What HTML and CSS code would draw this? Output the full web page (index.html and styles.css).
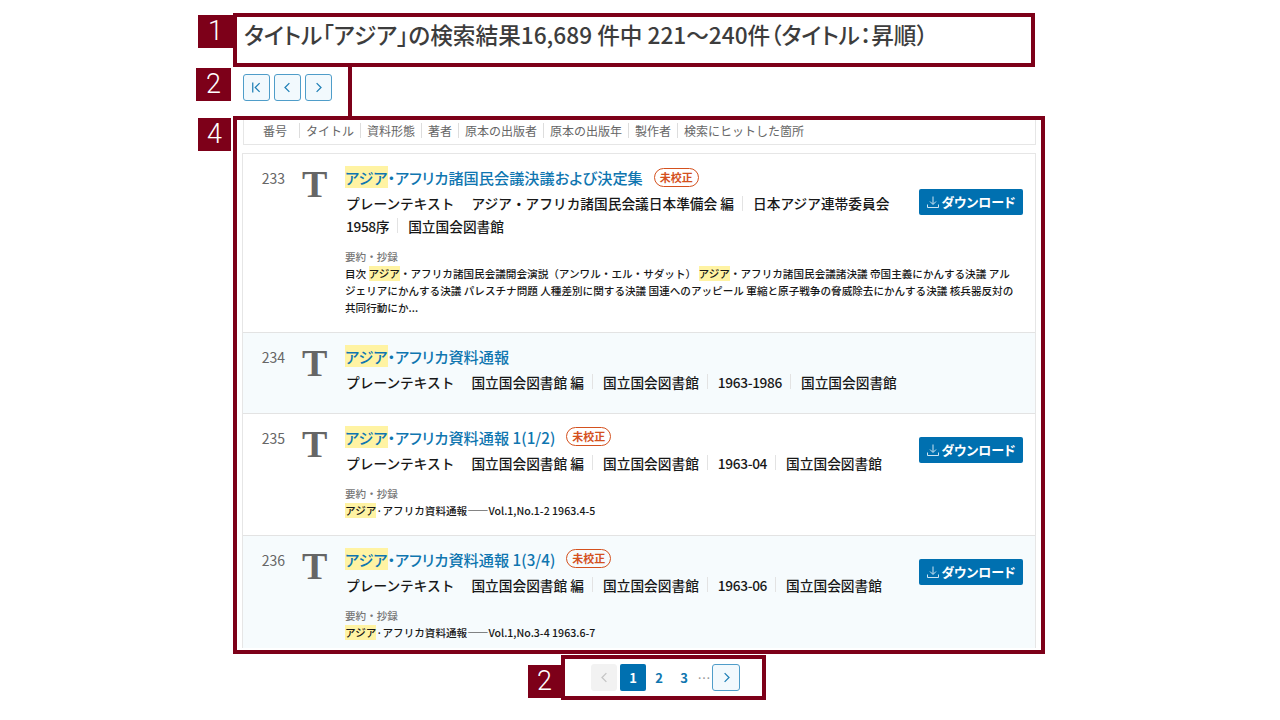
FILE: index.html
```html
<!DOCTYPE html>
<html lang="ja">
  <head>
    <meta charset="UTF-8" />
    <link rel="stylesheet" href="styles.css">
  </head>
  <body>
    <div class="page">
      <h1 class="resultTitle">タイトル「アジア」の検索結果16,689 件中 221～240件（タイトル：昇順）</h1>

      <div class="topPager">
        <button class="pageBtn"><svg viewBox="0 0 12 12"><path d="M3 2v8M8.500 2.500 5 6l3.500 3.500" /></svg></button>
        <button class="pageBtn"><svg viewBox="0 0 12 12"><path d="M7.500 2.500 4 6l3.500 3.500" /></svg></button>
        <button class="pageBtn"><svg viewBox="0 0 12 12"><path d="M4.500 2.500 8 6 4.500 9.500" /></svg></button>
      </div>

      <div class="sortBar">
        <span class="sortItem">番号</span>
        <span class="sortItem">タイトル</span>
        <span class="sortItem">資料形態</span>
        <span class="sortItem">著者</span>
        <span class="sortItem">原本の出版者</span>
        <span class="sortItem">原本の出版年</span>
        <span class="sortItem">製作者</span>
        <span class="sortItem">検索にヒットした箇所</span>
      </div>

      <div class="results">
        <div class="item">
          <div class="itemNum">233</div>
          <div class="itemType">T</div>
          <div class="itemBody">
            <div class="itemHead">
              <div class="itemInfo">
                <div class="itemTitle"><a><mark>アジア</mark>・アフリカ諸国民会議決議および決定集</a><span class="badge">未校正</span></div>
                <div class="itemMeta">
                  <span class="metaType">プレーンテキスト</span><span class="metaCell first">アジア・アフリカ諸国民会議日本準備会 編</span><span class="metaCell">日本アジア連帯委員会</span><span class="metaCell first year">1958序</span><span class="metaCell">国立国会図書館</span>
                </div>
              </div>
              <button class="dlBtn"><svg width="14" height="14" viewBox="0 0 14 14"><path d="M7 1.500v7.500M4 6.500 7 9.500l3-3M1.500 9.500v3h11v-3" /></svg>ダウンロード</button>
            </div>
            <div class="summary">
              <div class="summaryLabel">要約・抄録</div>
              <div class="summaryText">目次 <mark>アジア</mark>・アフリカ諸国民会議開会演説（アンワル・エル・サダット） <mark>アジア</mark>・アフリカ諸国民会議諸決議 帝国主義にかんする決議 アルジェリアにかんする決議 パレスチナ問題 人種差別に関する決議 国連へのアッピール 軍縮と原子戦争の脅威除去にかんする決議 核兵器反対の共同行動にか...</div>
            </div>
          </div>
        </div>

        <div class="item odd short">
          <div class="itemNum">234</div>
          <div class="itemType">T</div>
          <div class="itemBody">
            <div class="itemHead">
              <div class="itemInfo">
                <div class="itemTitle"><a><mark>アジア</mark>・アフリカ資料通報</a></div>
                <div class="itemMeta">
                  <span class="metaType">プレーンテキスト</span><span class="metaCell first">国立国会図書館 編</span><span class="metaCell">国立国会図書館</span><span class="metaCell year">1963-1986</span><span class="metaCell">国立国会図書館</span>
                </div>
              </div>
            </div>
          </div>
        </div>

        <div class="item">
          <div class="itemNum">235</div>
          <div class="itemType">T</div>
          <div class="itemBody">
            <div class="itemHead">
              <div class="itemInfo">
                <div class="itemTitle"><a><mark>アジア</mark>・アフリカ資料通報 1(1/2)</a><span class="badge">未校正</span></div>
                <div class="itemMeta">
                  <span class="metaType">プレーンテキスト</span><span class="metaCell first">国立国会図書館 編</span><span class="metaCell">国立国会図書館</span><span class="metaCell year">1963-04</span><span class="metaCell">国立国会図書館</span>
                </div>
              </div>
              <button class="dlBtn"><svg width="14" height="14" viewBox="0 0 14 14"><path d="M7 1.500v7.500M4 6.500 7 9.500l3-3M1.500 9.500v3h11v-3" /></svg>ダウンロード</button>
            </div>
            <div class="summary">
              <div class="summaryLabel">要約・抄録</div>
              <div class="summaryText"><mark>アジア</mark>·アフリカ資料通報――Vol.1,No.1-2 1963.4-5</div>
            </div>
          </div>
        </div>

        <div class="item odd">
          <div class="itemNum">236</div>
          <div class="itemType">T</div>
          <div class="itemBody">
            <div class="itemHead">
              <div class="itemInfo">
                <div class="itemTitle"><a><mark>アジア</mark>・アフリカ資料通報 1(3/4)</a><span class="badge">未校正</span></div>
                <div class="itemMeta">
                  <span class="metaType">プレーンテキスト</span><span class="metaCell first">国立国会図書館 編</span><span class="metaCell">国立国会図書館</span><span class="metaCell year">1963-06</span><span class="metaCell">国立国会図書館</span>
                </div>
              </div>
              <button class="dlBtn"><svg width="14" height="14" viewBox="0 0 14 14"><path d="M7 1.500v7.500M4 6.500 7 9.500l3-3M1.500 9.500v3h11v-3" /></svg>ダウンロード</button>
            </div>
            <div class="summary">
              <div class="summaryLabel">要約・抄録</div>
              <div class="summaryText"><mark>アジア</mark>·アフリカ資料通報――Vol.1,No.3-4 1963.6-7</div>
            </div>
          </div>
        </div>
      </div>

      <div class="bottomPager">
        <button class="pageBtn off"><svg viewBox="0 0 12 12"><path d="M7.500 2.500 4 6l3.500 3.500" /></svg></button>
        <span class="pageNum current">1</span>
        <span class="pageNum">2</span>
        <span class="pageNum">3</span>
        <span class="pageDots">…</span>
        <button class="pageBtn"><svg viewBox="0 0 12 12"><path d="M4.500 2.500 8 6 4.500 9.500" /></svg></button>
      </div>
    </div>

    <!-- annotation boxes drawn over the page -->
    <div class="note boxTitle"></div>
    <div class="note boxPager"></div>
    <div class="note boxList"></div>
    <div class="note boxBottom"></div>
    <div class="tag tag1">1</div>
    <div class="tag tag2">2</div>
    <div class="tag tag4">4</div>
    <div class="tag tag2b">2</div>
  </body>
</html>
```

FILE: styles.css
```css
* {
  box-sizing: border-box;
}

html, body {
  margin: 0;
  height: 720px;
  overflow: hidden;
  background-color: #fff;
}

body {
  font-family: "Noto Sans CJK JP", "Noto Sans", sans-serif;
  color: #222;
}

.page {
  width: 794px;
  margin-left: 242px;
  padding-top: 19px;
}

.resultTitle {
  margin: 0 0 0 2px;
  height: 32px;
  font-size: 22.650px;
  line-height: 32px;
  font-weight: 500;
  color: #3d3d3d;
  white-space: nowrap;
  font-feature-settings: "palt";
}

.topPager {
  display: flex;
  gap: 4px;
  margin: 23px 0 0 1px;
}

.pageBtn {
  display: flex;
  align-items: center;
  justify-content: center;
  width: 27px;
  height: 27px;
  padding: 0;
  background-color: #f2f9fd;
  border: 1px solid #4f9dc9;
  border-radius: 3px;
}

.pageBtn svg {
  width: 15px;
  height: 15px;
  fill: none;
  stroke: #1f7fb5;
  stroke-width: 1;
}

.pageBtn.off {
  width: 26px;
  background-color: #f2f2f2;
  border-color: #f2f2f2;
}

.pageBtn.off svg {
  stroke: #c4c4c4;
}

.sortBar {
  display: flex;
  align-items: center;
  height: 27px;
  margin: 17px 0 0 1px;
  padding: 0 0 2px 13px;
  border: 1px solid #e6e6e6;
  border-top: none;
  font-size: 12px;
  color: #666;
}

.sortItem {
  padding: 0 6px;
  line-height: 15px;
  border-left: 1px solid #ddd;
  white-space: nowrap;
}

.sortItem:first-child {
  padding-left: 6px;
  padding-right: 12px;
  border-left: none;
}

.results {
  height: 495px;
  margin-top: 8px;
  overflow: hidden;
  border: 1px solid #e6e6e6;
  border-bottom: none;
}

.item {
  display: flex;
  padding: 12px 12px 15.500px 0;
  border-bottom: 1px solid #e3e3e3;
}

.item.odd {
  background-color: #f6fbfd;
}

.item.short {
  padding-bottom: 19.500px;
}

.itemNum {
  width: 42px;
  padding-top: 1px;
  font-size: 14px;
  line-height: 22px;
  text-align: right;
  color: #666;
}

.itemType {
  width: 60px;
  padding-left: 17px;
  font-family: "Liberation Serif", serif;
  font-weight: bold;
  font-size: 38px;
  line-height: 36px;
  color: #666;
}

.itemBody {
  flex: 1;
  min-width: 0;
}

.itemHead {
  display: flex;
  align-items: center;
  justify-content: space-between;
}

.itemInfo {
  width: 566px;
}

.itemTitle {
  display: flex;
  align-items: center;
  height: 22px;
  font-size: 15.200px;
  font-weight: 500;
  color: #0f76b0;
  white-space: nowrap;
  font-feature-settings: "palt";
}

.itemTitle a {
  line-height: 22px;
}

mark {
  background-color: #fff3a3;
  color: inherit;
}

.badge {
  margin-left: 11px;
  padding: 0 5px;
  height: 19px;
  line-height: 17px;
  font-size: 11px;
  font-weight: 700;
  color: #d4511e;
  border: 1px solid #d4511e;
  border-radius: 10px;
}

.itemMeta {
  margin: 4px 0 0 1px;
  font-size: 13.700px;
  line-height: 22.500px;
  font-weight: 500;
  color: #181818;
}

.metaType {
  margin-right: 17px;
}

.metaCell {
  display: inline-block;
  padding: 0 8px 0 11px;
  background: linear-gradient(#e3e3e3, #e3e3e3) left center / 1px 15px no-repeat;
}

.metaCell.year {
  letter-spacing: -0.350px;
}

.metaCell.first {
  padding-left: 0;
  background: none;
}

.dlBtn {
  display: flex;
  align-items: center;
  justify-content: center;
  gap: 1px;
  width: 104px;
  height: 26px;
  padding: 0;
  background-color: #0070b0;
  border: none;
  border-radius: 2px;
  font-family: inherit;
  font-feature-settings: "palt";
  font-size: 13px;
  font-weight: 700;
  color: #fff;
}

.dlBtn svg {
  fill: none;
  stroke: #cfe5f2;
  stroke-width: 1;
}

.summary {
  margin: 11px 6px 0 0;
}

.summaryLabel {
  font-size: 10.600px;
  line-height: 17px;
  font-weight: 500;
  color: #777;
}

.summaryText {
  font-size: 10.600px;
  line-height: 17px;
  font-weight: 500;
  color: #181818;
}

.bottomPager {
  display: flex;
  align-items: center;
  margin: 16px 0 0 349px;
}

.bottomPager .pageBtn:last-child {
  width: 28px;
}

.pageNum {
  width: 26px;
  height: 27px;
  margin-right: -1px;
  font-size: 13px;
  font-weight: 700;
  line-height: 27px;
  text-align: center;
  color: #0f76b0;
}

.pageNum.current {
  margin-left: 3px;
  margin-right: 0;
  background-color: #0070b0;
  border-radius: 2px;
  color: #fff;
}

.pageDots {
  width: 16px;
  font-size: 13px;
  text-align: center;
  color: #999;
}

/* annotations */
.note {
  position: absolute;
  border: 4px solid #7d0019;
}

.boxTitle {
  left: 233px;
  top: 13px;
  width: 802px;
  height: 54px;
}

.boxPager {
  left: 348px;
  top: 63px;
  width: 4px;
  height: 57px;
  border-width: 0 0 0 4px;
}

.boxList {
  left: 233px;
  top: 116px;
  width: 812px;
  height: 538px;
}

.boxBottom {
  left: 561px;
  top: 655px;
  width: 205px;
  height: 45px;
}

.tag {
  position: absolute;
  width: 35px;
  height: 33px;
  background-color: #7d0019;
  color: #fff;
  font-family: Roboto, sans-serif;
  font-weight: 300;
  font-size: 27px;
  line-height: 33px;
  text-align: center;
}

.tag1 {
  left: 198px;
  top: 15px;
}

.tag2 {
  left: 196px;
  top: 68px;
}

.tag4 {
  left: 198px;
  top: 118px;
  width: 33px;
}

.tag2b {
  left: 528px;
  top: 665px;
  width: 33px;
}
```
